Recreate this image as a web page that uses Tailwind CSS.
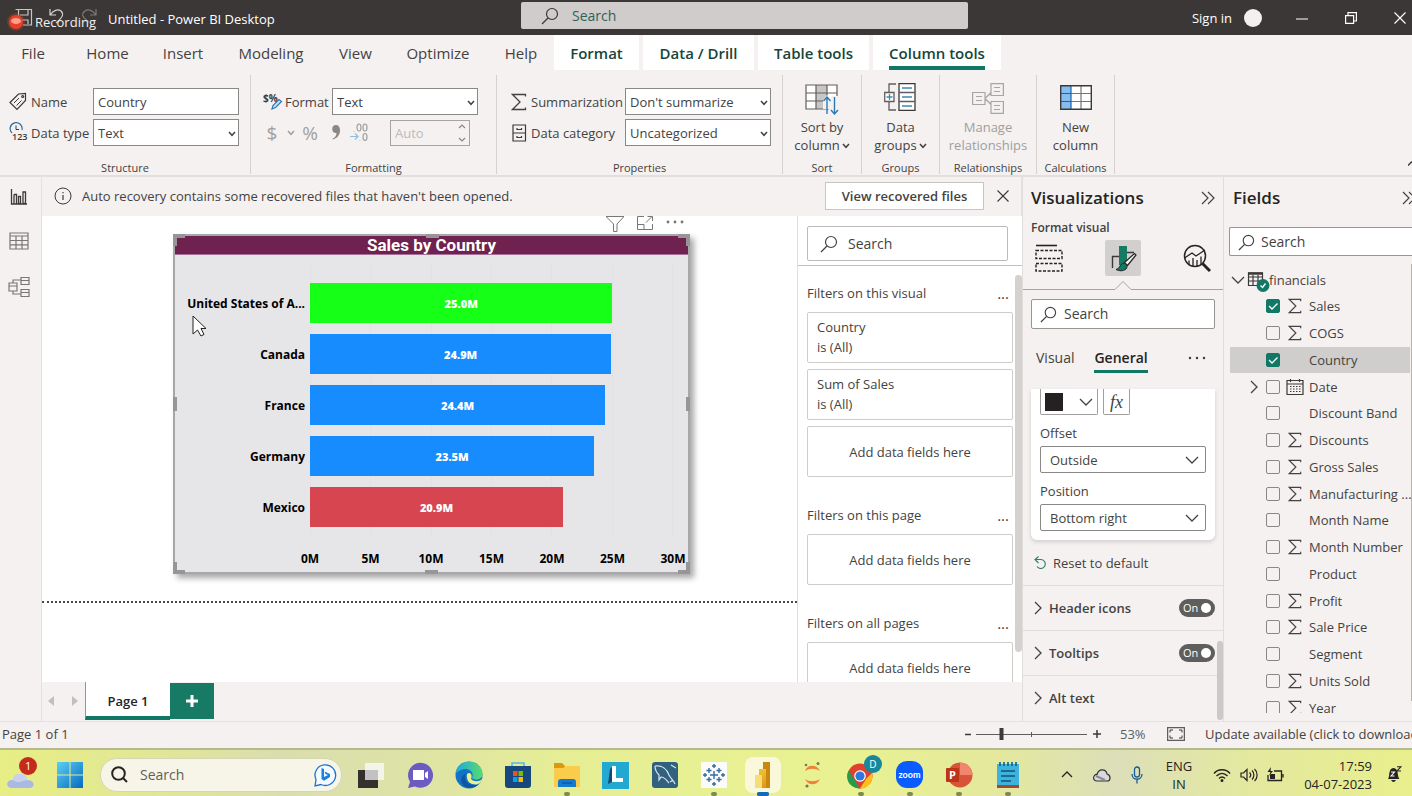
<!DOCTYPE html>
<html lang="en">
<head>
<meta charset="utf-8">
<title>Untitled - Power BI Desktop</title>
<script src="https://cdn.jsdelivr.net/npm/@tailwindcss/browser@4"></script>
</head>
<body class="flex h-screen flex-col overflow-hidden bg-[#f4f1f0] font-['Open_Sans','Noto_Sans',sans-serif] text-[13px] leading-4 text-[#444240]">

<svg class="hidden">
  <symbol id="sigma" viewBox="0 0 16 18"><path d="M14.500 3.500V1.500H1.500L9 9 1.500 16.500H14.500V14.500" fill="none" stroke="currentColor" stroke-width="1.300"/></symbol>
  <symbol id="lens" viewBox="0 0 18 18"><circle cx="11" cy="7" r="5.500" fill="none" stroke="currentColor" stroke-width="1.200"/><path d="M7 11 1 17" stroke="currentColor" stroke-width="1.300"/></symbol>
  <symbol id="down" viewBox="0 0 14 8"><path d="M1 1 7 7 13 1" fill="none" stroke="currentColor" stroke-width="1.300"/></symbol>
  <symbol id="smalldown" viewBox="0 0 8 6"><path d="M1 1 4 4.300 7 1" fill="none" stroke="currentColor" stroke-width="1.500"/></symbol>
  <symbol id="right" viewBox="0 0 8 14"><path d="M1 1 7 7 1 13" fill="none" stroke="currentColor" stroke-width="1.300"/></symbol>
  <symbol id="collapse" viewBox="0 0 14 14"><path d="M1 1 7 7 1 13M7 1 13 7 7 13" fill="none" stroke="currentColor" stroke-width="1.200"/></symbol>
  <symbol id="tick" viewBox="0 0 14 14"><path d="M3 7 6 10 11.500 4.500" fill="none" stroke="#fff" stroke-width="1.300"/></symbol>
</svg>

<!-- Title bar -->
<header class="flex h-[35px] shrink-0 items-center bg-[#3b3736] text-white">
  <div class="relative flex w-[108px] items-center self-stretch">
    <svg class="h-[35px] w-[108px]" viewBox="0 0 108 35" fill="none">
      <path d="M15.500 9.500H31.500V25H23M18.500 9.500V16M28 9.500V15H20M28 24V20H22" stroke="#c9c5c3" stroke-width="1.200"/>
      <path d="M50 9V15H56M50.500 14.500C53 10.500 58 8.500 61 11 64 14 63 17 56 23" stroke="#d6d3d1" stroke-width="1.200"/>
      <path d="M96 9V15H90M95.500 14.500C93 10.500 88 8.500 85 11 81 14 82 17 89 22" stroke="#7c7876" stroke-width="1.200"/>
      <circle cx="16" cy="22" r="9" fill="#f0462a" opacity=".25"/>
      <circle cx="16" cy="22" r="7" fill="#e8402b"/>
      <ellipse cx="16" cy="21" rx="5" ry="3" fill="#ff9f88"/>
    </svg>
    <span class="absolute top-[14px] left-[35px] text-[13px] text-[#f2f0ef]">Recording</span>
  </div>
  <h1 class="w-[413px] pt-[3px] text-[13px]">Untitled - Power BI Desktop</h1>
  <label class="-mt-1 flex h-[27px] w-[447px] items-center gap-[13px] rounded-xs bg-[#d0cccb] pt-px pl-5 text-[#3b3736]">
    <svg class="h-[18px] w-[18px]"><use href="#lens"/></svg>
    <input aria-label="Search" placeholder="Search" class="min-w-0 flex-1 bg-transparent text-[14px] outline-none placeholder:text-[#2e6354]">
  </label>
  <div class="ml-auto flex items-center">
    <button class="text-[13px]">Sign in</button>
    <span class="ml-3 size-[18px] rounded-full bg-[#f3f0ef]"></span>
    <button aria-label="Minimize" class="ml-[34px]"><svg class="h-3 w-3" viewBox="0 0 12 12"><path d="M0 7H12" stroke="#fff"/></svg></button>
    <button aria-label="Restore" class="ml-[37px]"><svg class="h-3 w-3" viewBox="0 0 12 12" fill="none" stroke="#fff" stroke-width="1.200"><path d="M.600 3.600H8.600V11.400H.600ZM3 3.600V.600H11.400V9H8.600"/></svg></button>
    <button aria-label="Close" class="mr-[6px] ml-[37px]"><svg class="h-3 w-3" viewBox="0 0 12 12"><path d="M.500.500 11.500 11.500M11.500.500.500 11.500" stroke="#fff" stroke-width="1.200"/></svg></button>
  </div>
</header>

<!-- Ribbon tabs -->
<nav class="flex h-[35px] shrink-0 text-[15px]">
  <button class="w-[66px]">File</button>
  <button class="w-[83px]">Home</button>
  <button class="w-[68px]">Insert</button>
  <button class="w-[108px]">Modeling</button>
  <button class="w-[61px]">View</button>
  <button class="w-[104px]">Optimize</button>
  <button class="w-[62px]">Help</button>
  <div class="ml-[2px] flex gap-1 font-semibold text-[#17453a] [&>button]:bg-white">
    <button class="w-[85px]">Format</button>
    <button class="w-[111px]">Data / Drill</button>
    <button class="w-[111px]">Table tools</button>
    <button class="flex w-[128px] flex-col items-center justify-end"><span class="border-b-4 border-[#117865] pb-[5px]">Column tools</span></button>
  </div>
</nav>

<!-- Ribbon -->
<section class="flex h-[107px] shrink-0 border-b-2 border-[#e3dfdd] pt-[5px] pb-px [&>div]:flex [&>div]:flex-col [&>div]:items-center [&>div]:justify-between [&>div]:border-r [&>div]:border-[#d5d1cf] [&_h2]:text-[11px] [&_h2]:leading-3">
  <div class="w-[251px]">
    <div class="mt-[13px] grid w-full grid-cols-[22px_62px_146px] gap-y-1 pl-[9px]">
      <svg class="h-[19px] w-[18px] self-center" viewBox="0 0 18 19" fill="none" stroke="#3b3a39" stroke-width="1.200"><path d="M1 10.500 9.500 2 16.500 1.500 16.500 8.500 8 17.500Z"/><path d="M5 11 10 6M7.500 13.500 12.500 8.500" stroke-width="1"/><circle cx="13.700" cy="4.500" r="1"/></svg>
      <label for="name" class="self-center">Name</label>
      <input id="name" value="Country" class="h-[27px] min-w-0 border border-[#8a8886] bg-white px-1">
      <svg class="h-[21px] w-[20px] self-center" viewBox="0 0 20 21"><path d="M3 11A6 6 0 1 1 13 8" fill="none" stroke="#2b6ea3" stroke-width="1.200"/><path d="M7 3.500V7.500H10" fill="none" stroke="#3b3a39"/><text x="3" y="17.500" font-size="9" font-weight="600" fill="#3b3a39">123</text></svg>
      <label for="dtype" class="self-center whitespace-nowrap">Data type</label>
      <div class="relative"><select id="dtype" class="h-[27px] w-full appearance-none border border-[#8a8886] bg-white px-1"><option>Text</option></select><svg class="pointer-events-none absolute top-3 right-[3px] h-[6px] w-2"><use href="#smalldown"/></svg></div>
    </div>
    <h2>Structure</h2>
  </div>
  <div class="w-[246px]">
    <div class="mt-[13px] flex w-full flex-col gap-1 pl-3">
      <div class="flex items-center">
        <svg class="h-[21px] w-[22px]" viewBox="0 0 22 21"><text x="0" y="11" font-size="10" font-weight="700" fill="#3b3a39">$%</text><path d="M9 18 10 14.500 16 8.500 18.500 10.500 12.500 16.500Z" fill="#cfe3f2" stroke="#2b7ab8" stroke-width="1.200"/></svg>
        <label for="fmt" class="w-[47px]">Format</label>
        <div class="relative"><select id="fmt" class="h-[27px] w-[146px] appearance-none border border-[#8a8886] bg-white px-1"><option>Text</option></select><svg class="pointer-events-none absolute top-3 right-[3px] h-[6px] w-2"><use href="#smalldown"/></svg></div>
      </div>
      <div class="flex h-[27px] items-center text-[#a19f9d]">
        <button disabled class="ml-[2px] w-[14px] text-[19px]">$</button>
        <svg class="ml-2 h-[6px] w-2"><use href="#smalldown"/></svg>
        <button disabled class="ml-1 w-[22px] text-[19px]">%</button>
        <svg class="ml-[10px] h-[15px] w-[10px]" viewBox="0 0 10 15"><path d="M5 0A4 4 0 1 0 5.500 8C5.500 11 4 12.500 1.500 13.500L2 14.500C6.500 13 9 10 9 5 9 2 7.500 0 5 0Z" fill="#8a8886"/></svg>
        <svg class="ml-2 h-[19px] w-[20px]" viewBox="0 0 20 19" fill="none" stroke="#a19f9d" stroke-width="1.200"><ellipse cx="10" cy="4.500" rx="2" ry="3.500"/><ellipse cx="16" cy="4.500" rx="2" ry="3.500"/><ellipse cx="16" cy="14" rx="2" ry="3.500"/><path d="M5 8V8.500M11 17V17.500"/><path d="M1 13.500H9M6 10.500 9 13.500 6 16.500" stroke="#8fbedd"/></svg>
        <div class="relative ml-[21px]"><input disabled aria-label="Decimal places" placeholder="Auto" class="h-[26px] w-[80px] border border-[#a6a3a1] bg-transparent px-1 placeholder:text-[#bdbab8]"><svg class="absolute top-1 right-1 h-[18px] w-2" viewBox="0 0 8 18" fill="none" stroke="#8a8886" stroke-width="1.200"><path d="M1 4 4 1 7 4M1 14 4 17 7 14"/></svg></div>
      </div>
    </div>
    <h2>Formatting</h2>
  </div>
  <div class="w-[286px]">
    <div class="mt-[13px] grid w-full grid-cols-[20px_94px_146px] gap-y-1 pl-[14px]">
      <svg class="h-[18px] w-4 self-center"><use href="#sigma"/></svg>
      <label for="summ" class="self-center">Summarization</label>
      <div class="relative"><select id="summ" class="h-[27px] w-full appearance-none border border-[#8a8886] bg-white px-1"><option>Don't summarize</option></select><svg class="pointer-events-none absolute top-3 right-[3px] h-[6px] w-2"><use href="#smalldown"/></svg></div>
      <svg class="h-[18px] w-4 self-center" viewBox="0 0 16 18" fill="none" stroke="#3b3a39" stroke-width="1.200"><path d="M2 1H14.500V17H2ZM2 9H14.500M6 4V5.500H10.500V4M6 12V13.500H10.500V12"/></svg>
      <label for="cat" class="self-center">Data category</label>
      <div class="relative"><select id="cat" class="h-[27px] w-full appearance-none border border-[#8a8886] bg-white px-1"><option>Uncategorized</option></select><svg class="pointer-events-none absolute top-3 right-[3px] h-[6px] w-2"><use href="#smalldown"/></svg></div>
    </div>
    <h2>Properties</h2>
  </div>
  <div class="w-[79px]">
    <button class="mt-2 flex flex-col items-center leading-[18px]">
      <svg class="mb-[3px] h-8 w-[34px]" viewBox="0 0 34 32" fill="none"><path d="M1 2H32V26H1Z" fill="#fff"/><path d="M11 2H22V26H11Z" fill="#c8c6c4"/><path d="M1 2H32V26H1ZM11 2V26M22 2V26M1 10H32M1 18H32" stroke="#605e5c" stroke-width="1.200"/><path d="M18 17 22 12 26 16 27 13H34V32H24V26H18Z" fill="#f4f1f0"/><path d="M22 31V14M18.500 18 22 14 25.500 18M29.500 14V31M26 27 29.500 31 33 27" stroke="#2b7ab8" stroke-width="1.400"/></svg>
      Sort by<span class="flex items-center gap-[2px]">column<svg class="mt-[2px] h-[6px] w-2"><use href="#smalldown"/></svg></span>
    </button>
    <h2>Sort</h2>
  </div>
  <div class="w-[78px]">
    <button class="mt-2 flex flex-col items-center leading-[18px]">
      <svg class="mb-[3px] h-8 w-8" viewBox="0 0 32 32" fill="none" stroke="#605e5c" stroke-width="1.300"><path d="M12 1H5V27H12"/><path d="M15 .700H31V27.300H15Z" fill="#fff" stroke="#3b3a39"/><path d="M15 9.500H31M15 18.500H31"/><path d="M.700 9.500H10V18.500H.700Z" fill="#fff"/><path d="M18 5H28M18 14H28M18 23H28M5.500 11V17M2.500 14H8.500" stroke="#3b8bb5"/></svg>
      Data<span class="flex items-center gap-[2px]">groups<svg class="mt-[2px] h-[6px] w-2"><use href="#smalldown"/></svg></span>
    </button>
    <h2>Groups</h2>
  </div>
  <div class="w-[97px]">
    <button disabled class="mt-2 flex flex-col items-center leading-[18px] text-[#a19f9d]">
      <svg class="mb-[3px] h-8 w-8" viewBox="0 0 32 32" fill="none" stroke="#a8a5a3" stroke-width="1.200"><path d="M.600 9.500H13V21.500H.600ZM19 .600H31.400V12.500H19ZM19 18.500H31.400V30.400H19ZM13 15.500 19 9.500M13 15.500 19 21.500M4 13.500H10M4 17.500H10M22 4.500H28M22 8.500H28M22 22.500H28M22 26.500H28"/></svg>
      Manage<span>relationships</span>
    </button>
    <h2>Relationships</h2>
  </div>
  <div class="w-[78px]">
    <button class="mt-2 flex flex-col items-center leading-[18px]">
      <svg class="mb-[3px] h-8 w-8" viewBox="0 0 32 32" fill="none"><path d="M.700 2.700H31.300V26.300H.700Z" fill="#fff"/><path d="M.700 2.700H11V26.300H.700Z" fill="#85bdf0"/><path d="M11 10.500H31M11 18.500H31M21 3V26" stroke="#797775" stroke-width="1.200"/><path d="M.700 10.500H11M.700 18.500H11M11 3V26" stroke="#1f62a5" stroke-width="1.200"/><path d="M.700 2.700H31.300V26.300H.700Z" stroke="#3b3a39" stroke-width="1.400"/></svg>
      New<span>column</span>
    </button>
    <h2>Calculations</h2>
  </div>
  <button aria-label="Collapse ribbon" class="ml-auto self-end pb-2"><svg class="h-[5px] w-1" viewBox="0 0 4 5"><path d="M0 4.500 4 .500" stroke="#3b3a39" stroke-width="1.500"/></svg></button>
</section>

<main class="flex min-h-0 flex-1">
  <!-- View switcher -->
  <aside class="flex w-[42px] shrink-0 flex-col items-center gap-[25px] border-r border-[#e5e1df] pt-[11px] pr-[3px]">
    <button aria-label="Report view"><svg class="h-[18px] w-[18px]" viewBox="0 0 18 18" fill="none" stroke="#3b3a39" stroke-width="1.300"><path d="M1.500 1V16H17M4 6.500H6.500V15.500M4 6.500V15.500M8.500 8.500H10.500V15.500H8.500ZM13 4H15.500V15.500H13Z"/></svg></button>
    <button aria-label="Data view"><svg class="h-[20px] w-[20px]" viewBox="0 0 20 20" fill="none" stroke="#797775" stroke-width="1.200"><path d="M1 2H19V18H1ZM1 5H19M1 9.500H19M1 13.800H19M7 5V18M13 5V18"/></svg></button>
    <button aria-label="Model view"><svg class="h-[22px] w-[22px]" viewBox="0 0 22 22" fill="none" stroke="#797775" stroke-width="1.200"><path d="M1 7H9V15H1ZM1 10H9M13 1.500H21V8.500H13ZM13 4.500H21M13 13.500H21V20.500H13ZM13 16.500H21M5 7V4H13M5 15V18H13"/></svg></button>
  </aside>

  <div class="flex min-w-0 flex-1 flex-col">
    <div class="flex h-[39px] shrink-0 items-center border-r border-[#e5e1df] pb-[2px] pl-3">
      <svg class="size-[18px]" viewBox="0 0 18 18" fill="none" stroke="#3b3a39"><circle cx="9" cy="9" r="8"/><path d="M9 8V13M9 5V6.300" stroke-width="1.200"/></svg>
      <p class="ml-[10px]">Auto recovery contains some recovered files that haven't been opened.</p>
      <button class="ml-auto h-7 w-[159px] border border-[#c8c6c4] bg-white font-semibold">View recovered files</button>
      <button aria-label="Dismiss" class="mr-3 ml-[13px]"><svg class="size-[12px]" viewBox="0 0 12 12"><path d="M.500.500 11.500 11.500M11.500.500.500 11.500" stroke="#3b3a39" stroke-width="1.100"/></svg></button>
    </div>

    <div class="flex min-h-0 flex-1 bg-white">
      <!-- Report canvas -->
      <div class="min-w-0 flex-1">
        <div class="ml-[131px] w-[517px]">
          <div class="flex h-[18px] justify-end gap-[13px] pr-[6px]">
            <svg class="h-[16px] w-[18px]" viewBox="0 0 18 16" fill="none" stroke="#797775"><path d="M0 .500H18L11 8V15.500H7.500V8Z"/></svg>
            <svg class="h-[14px] w-[16px]" viewBox="0 0 16 14" fill="none" stroke="#797775"><path d="M7 .500H.500V13.500H15.500V8M.500 8.500H7V13.500M9 6.500 15 .500M10.500.500H15.500V5"/></svg>
            <svg class="h-[14px] w-[18px]" viewBox="0 0 18 14" fill="#797775"><circle cx="2" cy="6" r="1.400"/><circle cx="9" cy="6" r="1.400"/><circle cx="16" cy="6" r="1.400"/></svg>
          </div>
          <figure class="relative flex h-[340px] flex-col border-2 border-[#a8a6a8] bg-[#e6e5e8] text-[12px] font-bold text-black shadow-[4px_4px_6px_rgba(0,0,0,0.35)]">
            <figcaption class="h-[19px] border-b border-[#a5719a] bg-[#6f2150] text-center font-['Roboto',sans-serif] text-[17px] leading-[19px] font-bold text-white">Sales by Country</figcaption>
            <div class="relative flex flex-1 flex-col pt-7 pl-[135px]">
              <div class="pointer-events-none absolute top-[10px] bottom-[34px] left-[135px] flex w-[363px] justify-between [&>i]:border-l [&>i]:border-dotted [&>i]:border-[#dedcdf]"><i></i><i></i><i></i><i></i><i></i><i></i><i></i></div>
              <div class="relative flex w-[363px] flex-col gap-[11px] [&>div]:flex [&>div]:h-10 [&>div]:items-center [&_b]:flex [&_b]:h-10 [&_b]:items-center [&_b]:justify-center [&_b]:pt-px [&_b]:text-[11px] [&_b]:text-white [&_span]:-ml-[135px] [&_span]:w-[135px] [&_span]:shrink-0 [&_span]:pt-px [&_span]:pr-[5px] [&_span]:text-right [&_span]:whitespace-nowrap">
                <div><span>United States of A...</span><b class="bg-[#16ff16]" style="width:83.3%">25.0M</b></div>
                <div><span>Canada</span><b class="bg-[#168cff]" style="width:83%">24.9M</b></div>
                <div><span>France</span><b class="bg-[#168cff]" style="width:81.3%">24.4M</b></div>
                <div><span>Germany</span><b class="bg-[#168cff]" style="width:78.3%">23.5M</b></div>
                <div><span>Mexico</span><b class="bg-[#d64550]" style="width:69.7%">20.9M</b></div>
              </div>
              <div class="mt-6 flex w-[363px] justify-between [&>span]:flex [&>span]:w-0 [&>span]:justify-center"><span>0M</span><span>5M</span><span>10M</span><span>15M</span><span>20M</span><span>25M</span><span>30M</span></div>
            </div>
            <!-- Resize handles and pointer -->
            <svg class="pointer-events-none absolute -top-[2px] -left-[2px] h-[340px] w-[517px]" viewBox="0 0 517 340" fill="none" stroke="#979597" stroke-width="4">
              <path d="M2 12V2H12M253 2H266M505 2H515V12M2 328V338H12M252 338H265M505 338H515V328M2 163V177M515 163V177"/>
              <path d="M20 82V100L24.500 96 28 102 31 100.500 28 94.500H33Z" fill="#fff" stroke="#222" stroke-width="1"/>
            </svg>
          </figure>
        </div>
        <div class="mt-[27px] border-t-2 border-dotted border-[#4a4848]"></div>
      </div>

      <!-- Filters -->
      <aside class="flex w-[225px] shrink-0 flex-col border-l border-[#e0dddb]">
        <div class="border-b border-[#c0bdbb] px-[9px] pt-[10px] pb-1 pr-[14px]">
          <label class="flex h-[35px] items-center gap-[10px] rounded-xs border border-[#bdbab8] px-3"><svg class="size-[18px]"><use href="#lens"/></svg><input aria-label="Search filters" placeholder="Search" class="min-w-0 flex-1 text-[14px] outline-none placeholder:text-[#444240]"></label>
        </div>
        <div class="relative min-h-0 flex-1 overflow-hidden pt-[18px] pr-[9px] pl-[9px] [&>section>h3]:flex [&>section>h3]:h-[18px] [&>section>h3]:items-center [&>section>h3]:justify-between [&>section>h3]:pr-1 [&>section>ul]:mt-[10px] [&>section>ul]:flex [&>section>ul]:flex-col [&>section>ul]:gap-[6px] [&_li]:h-[51px] [&_li]:rounded-xs [&_li]:border [&_li]:border-[#cfccca] [&_li]:leading-5">
          <section>
            <h3>Filters on this visual <button aria-label="More" class="text-[15px]">...</button></h3>
            <ul>
              <li class="px-[9px] pt-1">Country<br>is (All)</li>
              <li class="px-[9px] pt-1">Sum of Sales<br>is (All)</li>
              <li class="flex items-center justify-center">Add data fields here</li>
            </ul>
          </section>
          <section class="mt-[29px]">
            <h3>Filters on this page <button aria-label="More" class="text-[15px]">...</button></h3>
            <ul><li class="flex items-center justify-center">Add data fields here</li></ul>
          </section>
          <section class="mt-[29px]">
            <h3>Filters on all pages <button aria-label="More" class="text-[15px]">...</button></h3>
            <ul><li class="flex items-center justify-center">Add data fields here</li></ul>
          </section>
          <div class="absolute top-[9px] right-0 bottom-[30px] w-[7px] rounded-full bg-[#d4d1d0]"></div>
        </div>
      </aside>
    </div>

    <!-- Page tabs -->
    <div class="flex h-[39px] shrink-0 items-start">
      <button aria-label="Previous page" class="mt-[14px] ml-[6px]"><svg class="h-[10px] w-[6px]" viewBox="0 0 6 10"><path d="M6 0V10L0 5Z" fill="#c2bfbd"/></svg></button>
      <button aria-label="Next page" class="mt-[14px] ml-[18px]"><svg class="h-[10px] w-[6px]" viewBox="0 0 6 10"><path d="M0 0V10L6 5Z" fill="#c2bfbd"/></svg></button>
      <button class="ml-[7px] h-[38px] w-[85px] border-b-4 border-l border-b-[#117865] border-l-[#979593] bg-white pt-1 font-semibold text-[#252423]">Page 1</button>
      <button aria-label="New page" class="mt-px flex h-9 w-11 items-center justify-center bg-[#177a64]"><svg class="size-3" viewBox="0 0 12 12"><path d="M6 0V12M0 6H12" stroke="#fff" stroke-width="3"/></svg></button>
    </div>
  </div>

  <!-- Visualizations -->
  <aside class="relative flex w-[202px] shrink-0 flex-col overflow-hidden border-x border-[#e0dddb]">
    <div class="flex items-center justify-between px-[8px] pt-[11px]"><h2 class="text-[17px] leading-5 font-semibold text-[#252423]">Visualizations</h2><button aria-label="Collapse"><svg class="size-[14px]"><use href="#collapse"/></svg></button></div>
    <h3 class="mt-3 px-[8px] text-[12px] leading-4 font-semibold">Format visual</h3>
    <div class="mt-1 flex h-9 items-center pl-[12px]">
      <button aria-label="Build visual"><svg class="size-7" viewBox="0 0 28 28" fill="none" stroke="#252423"><path d="M1 1.500H22" stroke-width="1.600"/><path d="M1 6.500H27V14.500H1ZM1 19.500H27V27H1Z" stroke-width="1.400" stroke-dasharray="3 1.500"/></svg></button>
      <button aria-label="Format visual" class="ml-[42px] flex size-9 items-center justify-center rounded-xs bg-[#d2d0ce]"><svg class="size-7" viewBox="0 0 28 28" fill="none"><path d="M3.500 24V12.500H10M18 8.500H25" stroke="#3b3a39" stroke-width="1.400"/><path d="M10 2H18V16L13 21H10Z" fill="#177a64"/><path d="M15.500 18.500 25.500 9.500 27 11 18.500 21.500Z" fill="#f4f1f0" stroke="#252423" stroke-width="1.200"/><path d="M7 25.500C11 25 10 21 13.500 19.500 17 18.500 19.500 22 17 25 14 27.500 10 27 7 25.500Z" fill="#117865" stroke="#252423"/></svg></button>
      <button aria-label="Analytics" class="ml-[42px]"><svg class="size-7" viewBox="0 0 28 28" fill="none" stroke="#252423" stroke-width="1.500"><circle cx="12" cy="12" r="10.500"/><path d="M19.500 19.500 27 27" stroke-width="3"/><path d="M1.500 14 9 9 13 12 22 6M6 21V16.500M10 22.500V14M14 22.500V16M18 20V12.500" stroke-width="1.300"/></svg></button>
    </div>
    <svg class="mt-1 h-[10px] w-[201px] shrink-0" viewBox="0 0 201 10" fill="none"><path d="M0 9.500H92L100 1.500 108 9.500H201" stroke="#a6a3a1"/></svg>
    <label class="mt-[9px] mr-[8px] ml-[8px] flex h-[30px] items-center gap-[7px] rounded-xs border border-[#979593] bg-white px-2"><svg class="size-[17px]"><use href="#lens"/></svg><input aria-label="Search settings" placeholder="Search" class="min-w-0 flex-1 text-[14px] outline-none placeholder:text-[#444240]"></label>
    <div class="mt-[17px] flex h-[27px] items-start pl-[13px] text-[14px] leading-6">
      <button class="h-6">Visual</button>
      <button class="ml-5 h-[27px] border-b-[3px] border-[#117865] font-semibold text-[#252423]">General</button>
      <button aria-label="More options" class="mt-[10px] ml-auto mr-[17px]"><svg class="h-1 w-[18px]" viewBox="0 0 18 4" fill="#3b3a39"><circle cx="2" cy="2" r="1.200"/><circle cx="9" cy="2" r="1.200"/><circle cx="16" cy="2" r="1.200"/></svg></button>
    </div>
    <div class="mx-[8px] mt-[16px] flex flex-col rounded-b-md bg-white px-[9px] pb-[9px] shadow-[0_2px_4px_rgba(0,0,0,0.15)]">
      <div class="flex gap-[5px]">
        <button aria-label="Shadow color" class="flex h-[26px] w-[58px] items-center justify-between rounded-b-xs border border-t-0 border-[#a19f9d] pr-1 pl-1"><span class="size-[18px] bg-[#252021]"></span><svg class="h-2 w-[14px]"><use href="#down"/></svg></button>
        <button aria-label="Conditional formatting" class="h-[26px] w-[27px] rounded-b-xs border border-t-0 border-[#a19f9d] font-['Liberation_Serif',serif] text-[18px] leading-5 italic">fx</button>
      </div>
      <label for="offset" class="mt-[10px]">Offset</label>
      <div class="relative mt-[5px]"><select id="offset" class="h-[27px] w-full appearance-none rounded-xs border border-[#8a8886] bg-white px-[9px]"><option>Outside</option></select><svg class="pointer-events-none absolute top-[10px] right-[7px] h-2 w-[14px]"><use href="#down"/></svg></div>
      <label for="position" class="mt-[10px]">Position</label>
      <div class="relative mt-[5px]"><select id="position" class="h-[27px] w-full appearance-none rounded-xs border border-[#8a8886] bg-white px-[9px]"><option>Bottom right</option></select><svg class="pointer-events-none absolute top-[10px] right-[7px] h-2 w-[14px]"><use href="#down"/></svg></div>
    </div>
    <button class="flex h-[45px] shrink-0 items-center gap-[6px] pl-[11px]"><svg class="size-[13px]" viewBox="0 0 13 13" fill="none" stroke="#2c7f6a" stroke-width="1.100"><path d="M4.500.500 1 3.500 4.500 7M1 3.500H7A4.500 4.500 0 1 1 3 10.500"/></svg>Reset to default</button>
    <div class="[&>div]:flex [&>div]:h-[45px] [&>div]:items-center [&>div]:border-t [&>div]:border-[#e0dddb] [&>div]:pr-[8px] [&>div]:pl-[11px] [&>div]:font-semibold">
      <div><svg class="mr-[7px] h-[14px] w-2"><use href="#right"/></svg>Header icons<label class="ml-auto flex h-[18px] w-9 items-center justify-between rounded-full bg-[#605e5c] px-1 text-[11px] font-normal text-white"><input type="checkbox" checked aria-label="Header icons" class="sr-only">On<span class="size-[10px] rounded-full bg-white"></span></label></div>
      <div><svg class="mr-[7px] h-[14px] w-2"><use href="#right"/></svg>Tooltips<label class="ml-auto flex h-[18px] w-9 items-center justify-between rounded-full bg-[#605e5c] px-1 text-[11px] font-normal text-white"><input type="checkbox" checked aria-label="Tooltips" class="sr-only">On<span class="size-[10px] rounded-full bg-white"></span></label></div>
      <div><svg class="mr-[7px] h-[14px] w-2"><use href="#right"/></svg>Alt text</div>
    </div>
    <div class="absolute right-0 bottom-px h-[79px] w-[6px] rounded-full bg-[#cbc8c7]"></div>
  </aside>

  <!-- Fields -->
  <aside class="relative flex w-[188px] shrink-0 flex-col overflow-hidden">
    <div class="flex items-center justify-between pt-[11px] pl-[9px]"><h2 class="text-[17px] leading-5 font-semibold text-[#252423]">Fields</h2><button aria-label="Collapse" class="w-[10px] overflow-hidden"><svg class="size-[14px]"><use href="#collapse"/></svg></button></div>
    <label class="mt-[19px] ml-[5px] flex h-[29px] shrink-0 items-center gap-[6px] rounded-l-xs border border-r-0 border-[#979593] bg-white px-2 pt-px"><svg class="size-[17px]"><use href="#lens"/></svg><input aria-label="Search fields" placeholder="Search" class="min-w-0 flex-1 text-[14px] outline-none placeholder:text-[#444240]"></label>
    <div class="mb-[8px] min-h-0 flex-1 overflow-hidden pt-[10px] pr-[2px] pl-[6px]">
      <div class="flex h-[27px] items-center pl-[1px]"><svg class="h-2 w-[14px]"><use href="#down"/></svg>
        <svg class="ml-[2px] h-[24px] w-[24px]" viewBox="0 0 24 24" fill="none"><path d="M1.500 5H15.500V17.500H1.500ZM1.500 9H15.500M1.500 13H15.500M6 7V17M11 7V17" stroke="#3b3a39" stroke-width="1.200"/><path d="M1 5.500H16" stroke="#3b3a39" stroke-width="2.500"/><circle cx="16" cy="17.500" r="6.500" fill="#117865"/><path d="M13.500 17.500 15.500 19.500 18.500 15.500" stroke="#fff" stroke-width="1.300"/></svg>
        <span class="-ml-[2px]">financials</span></div>
      <ul class="flex h-[428px] flex-col [&>li]:flex [&>li]:flex-1 [&>li]:items-center [&>li]:pl-[20px] [&>li]:whitespace-nowrap [&_input]:col-start-1 [&_input]:row-start-1 [&_input]:size-[14px] [&_input]:appearance-none [&_input]:rounded-xs [&_input]:border [&_input]:border-[#8a8886] [&_input]:checked:border-[#117865] [&_input]:checked:bg-[#117865] [&_label]:flex [&_label]:shrink-0 [&_label]:items-center [&_label>span]:ml-2 [&_label>span]:flex [&_label>span]:w-[21px] [&_label>i]:grid [&_label>i]:size-[14px] [&_i>svg]:z-1 [&_i>svg]:col-start-1 [&_i>svg]:row-start-1 [&_i>svg]:size-[14px] [&_span>svg]:h-[18px] [&_span>svg]:w-[14px] [&_em]:w-4 [&_em]:shrink-0">
        <li><em></em><label><i><input type="checkbox" checked><svg><use href="#tick"/></svg></i><span><svg><use href="#sigma"/></svg></span>Sales</label></li>
        <li><em></em><label><i><input type="checkbox"></i><span><svg><use href="#sigma"/></svg></span>COGS</label></li>
        <li class="bg-[#d0cecd]"><em></em><label><i><input type="checkbox" checked><svg><use href="#tick"/></svg></i><span></span>Country</label></li>
        <li><em><svg class="h-[14px] w-2"><use href="#right"/></svg></em><label><i><input type="checkbox"></i><span><svg class="-ml-[2px] min-w-[18px]" viewBox="0 0 18 18" fill="none" stroke="#3b3a39" stroke-width="1.200"><path d="M1 2.500H17V16.500H1ZM1 6H17M4.500 1V4M13.500 1V4"/><path d="M4 8.500H14.500M4 11H14.500M4 13.500H14.500" stroke-dasharray="1.500 1.500"/></svg></span>Date</label></li>
        <li><em></em><label><i><input type="checkbox"></i><span></span>Discount Band</label></li>
        <li><em></em><label><i><input type="checkbox"></i><span><svg><use href="#sigma"/></svg></span>Discounts</label></li>
        <li><em></em><label><i><input type="checkbox"></i><span><svg><use href="#sigma"/></svg></span>Gross Sales</label></li>
        <li><em></em><label><i><input type="checkbox"></i><span><svg><use href="#sigma"/></svg></span>Manufacturing ...</label></li>
        <li><em></em><label><i><input type="checkbox"></i><span></span>Month Name</label></li>
        <li><em></em><label><i><input type="checkbox"></i><span><svg><use href="#sigma"/></svg></span>Month Number</label></li>
        <li><em></em><label><i><input type="checkbox"></i><span></span>Product</label></li>
        <li><em></em><label><i><input type="checkbox"></i><span><svg><use href="#sigma"/></svg></span>Profit</label></li>
        <li><em></em><label><i><input type="checkbox"></i><span><svg><use href="#sigma"/></svg></span>Sale Price</label></li>
        <li><em></em><label><i><input type="checkbox"></i><span></span>Segment</label></li>
        <li><em></em><label><i><input type="checkbox"></i><span><svg><use href="#sigma"/></svg></span>Units Sold</label></li>
        <li><em></em><label><i><input type="checkbox"></i><span><svg><use href="#sigma"/></svg></span>Year</label></li>
      </ul>
    </div>
    <div class="absolute top-[87px] right-0 bottom-5 w-px bg-[#b5b2b0]"></div>
  </aside>
</main>

<!-- Status bar -->
<footer class="flex h-[27px] shrink-0 items-center overflow-hidden border-t border-[#e5e1df] pb-[2px] pl-[2px] whitespace-nowrap">
  <span>Page 1 of 1</span>
  <button aria-label="Zoom out" class="ml-auto"><svg class="h-3 w-[6px]" viewBox="0 0 6 12"><path d="M0 6.500H6" stroke="#3b3a39" stroke-width="1.500"/></svg></button>
  <svg class="ml-[5px] h-3 w-[111px]" viewBox="0 0 111 12"><path d="M0 6.500H111M55.500 4V9" stroke="#605e5c"/><path d="M25.500 0V12" stroke="#3b3a39" stroke-width="4"/></svg>
  <button aria-label="Zoom in" class="ml-[6px]"><svg class="size-2" viewBox="0 0 8 8"><path d="M4 0V8M0 4H8" stroke="#3b3a39" stroke-width="1.500"/></svg></button>
  <span class="ml-[19px] w-[47px] text-[13px] text-[#605e5c]">53%</span>
  <button aria-label="Fit to page"><svg class="h-[14px] w-[18px]" viewBox="0 0 18 14" fill="none" stroke="#605e5c"><path d="M.600.600H17.400V13.400H.600Z" stroke-width="1.300"/><path d="M3 5.500V3H6M12 3H15V5.500M15 8.500V11H12M6 11H3V8.500" stroke="#3b3a39"/></svg></button>
  <button class="ml-5 w-[207px] overflow-hidden text-left">Update available (click to download)</button>
</footer>

<!-- Windows taskbar -->
<footer class="flex h-[48px] shrink-0 items-center border-t-2 border-[#b4ba8a] bg-[linear-gradient(90deg,#e7ee84_0%,#e2e795_10%,#dadeae_20%,#dde2a8_28%,#e6ee95_40%,#e9f291_60%,#e4e99c_70%,#dcdfb8_79%,#e3e8a0_88%,#e9ef8c_100%)] pt-[3px] text-[#252423]">
  <button aria-label="Weather" class="w-[46px]"><svg class="-mt-1 h-9 w-10" viewBox="0 0 40 36"><path d="M12 33C5 33 6 24 13 25 14 17 26 17 27 25 35 25 36 33 29 33Z" fill="#a9b9e2"/><path d="M13 25C14 17 26 17 27 25 22 26 18 29 13 25Z" fill="#c7d2f0"/><circle cx="28" cy="11" r="9" fill="#c42b1c"/><text x="25" y="15" font-size="11" fill="#fff">1</text></svg></button>
  <button aria-label="Start" class="flex w-[54px] items-center justify-start pl-[11px]"><svg class="size-[26px]" viewBox="0 0 26 26"><defs><linearGradient id="win" x2="1" y2="1"><stop stop-color="#5cd0f5"/><stop offset="1" stop-color="#0669bf"/></linearGradient></defs><path d="M0 0H12.500V12.500H0ZM13.500 0H26V12.500H13.500ZM0 13.500H12.500V26H0ZM13.500 13.500H26V26H13.500Z" fill="url(#win)"/></svg></button>
  <label class="flex h-[34px] w-[242px] items-center gap-3 rounded-full border border-[#d5d7b4] bg-[#f7f5e8] pr-1 pl-[10px]">
    <svg class="size-[17px]" viewBox="0 0 17 17" fill="none" stroke="#252423" stroke-width="2"><circle cx="7.500" cy="7.500" r="6.300"/><path d="M12 12 16 16"/></svg>
    <input aria-label="Taskbar search" placeholder="Search" class="min-w-0 flex-1 bg-transparent text-[14px] outline-none placeholder:text-[#605e5c]">
    <svg class="size-6" viewBox="0 0 24 24"><path d="M2 23 3 16.500A10.300 10.300 0 1 1 8 21.500Z" fill="#f4fbff" stroke="#1f72d0" stroke-width="1.300"/><path d="M8.500 5 11 6V14L15 12 12.500 11 11.500 8.500 17 11V14L11 17.800 8.500 16Z" fill="#1b7fe0"/></svg>
  </label>
  <div class="ml-1 flex self-stretch [&>button]:relative [&>button]:flex [&>button]:w-[49px] [&>button]:items-center [&>button]:justify-center [&>button>svg]:size-[28px] [&_i]:absolute [&_i]:bottom-0 [&_i]:h-1 [&_i]:w-[6px] [&_i]:rounded-full [&_i]:bg-[#80894f]">
    <button aria-label="Task view"><svg viewBox="0 0 28 28"><path d="M1 9H21V27H1Z" fill="#33302e"/><path d="M8 2H27V19H8Z" fill="#fafafa" opacity=".8"/><path d="M8 9H21V19H8Z" fill="#c3c1c1"/></svg></button>
    <button aria-label="Chat"><svg viewBox="0 0 28 28"><path d="M2 27 4 21A12.500 12.500 0 1 1 9 25.500Z" fill="#6c5bc0"/><path d="M7 9H18V19H7ZM19 12 22 10V18L19 16Z" fill="#fff"/></svg></button>
    <button aria-label="Edge"><svg viewBox="0 0 28 28"><defs><linearGradient id="edge"><stop stop-color="#1fa7e0"/><stop offset="1" stop-color="#57dc6d"/></linearGradient></defs><circle cx="14" cy="14" r="13.500" fill="#1372c4"/><path d="M.500 13C2-4 27-3 27.500 13 27.500 19 20 20 17 17 20 10 12 6 6 9 3 10 1 12 .500 13Z" fill="url(#edge)"/><path d="M10 14C9 21 15 26 24 23 21 26 15 28 11 26 3 22 6 13 13 12 11 13 10 13 10 14Z" fill="#0f55a3"/><path d="M12 13C15 10 18 14 16 18 19 21 24 21 27 18 26 21 24 23 22 23.500 14 24 11 19 12 13Z" fill="#e9f291"/></svg></button>
    <button aria-label="Microsoft Store"><svg viewBox="0 0 28 28"><path d="M8 6V2H20V6" fill="none" stroke="#57b7e5" stroke-width="1.600"/><path d="M1 5H27V24Q27 27 24 27H4Q1 27 1 24Z" fill="#17477f"/><path d="M9 10H13.500V15H9Z" fill="#f25022"/><path d="M14.500 10H19V15H14.500Z" fill="#7fba00"/><path d="M9 16H13.500V21H9Z" fill="#00a4ef"/><path d="M14.500 16H19V21H14.500Z" fill="#ffb900"/></svg></button>
    <button aria-label="File Explorer"><svg viewBox="0 0 28 28"><path d="M1 2H9L12 5V12H1Z" fill="#d99a12"/><path d="M1 7H10L13 5H27V26H1Z" fill="#fbcb4b"/><path d="M5 26V21Q5 18 8 18H20Q23 18 23 21V26Z" fill="#1479d1"/><path d="M9 22H19" stroke="#0c5ba4" stroke-width="1.500"/></svg><i></i></button>
    <button aria-label="L app"><svg viewBox="0 0 28 28"><path d="M0 1H27V28H0Z" fill="#22a9d2"/><path d="M10 6V21L6 23 8 8Z" fill="#164a6d"/><path d="M10 5H14V17H21V21H10Z" fill="#fff"/></svg></button>
    <button aria-label="MySQL Workbench"><svg viewBox="0 0 28 28"><rect x="1" y="1" width="26" height="26" rx="3" fill="#32617f"/><path d="M4 5C11 4 16 8 18 14 20 18 23 20 24 23M4 5C4 10 6 12 8 14V19L10 16C14 16 16 20 18 22M20 4 25 7M22 19 19 21" fill="none" stroke="#d6e4ec" stroke-width="1.200"/></svg></button>
    <button aria-label="Tableau"><svg viewBox="0 0 28 28" fill="none"><path d="M1 1H27V27H1Z" fill="#fbfbfa"/><path d="M14 10V18M10 14H18M9 7V12M6.500 9.500H11.500M19 7V12M16.500 9.500H21.500M9 16V21M6.500 18.500H11.500M19 16V21M16.500 18.500H21.500M14 3V7M12 5H16M14 21V25M12 23H16M5 12V16M3 14H7M23 12V16M21 14H25" stroke="#376ca0" stroke-width="1.400"/></svg><i></i></button>
    <button aria-label="Power BI"><svg class="rounded-sm bg-[#f9f8db] outline-4 outline-[#f9f8db]" viewBox="0 0 28 28"><defs><linearGradient id="pbi" x2="0" y2="1"><stop stop-color="#f2c033"/><stop offset="1" stop-color="#e0951a"/></linearGradient></defs><path d="M14 1H21V27H14Z" fill="#c8870e"/><path d="M10 8H17V27H10Z" fill="url(#pbi)"/><path d="M6 14H13V27H6Z" fill="#f8dc78"/></svg><i class="min-w-3 text-[#0f6cbd]"><svg class="h-1 w-3" viewBox="0 0 12 4"><rect width="12" height="4" rx="2" fill="currentColor"/></svg></i></button>
    <button aria-label="Jupyter"><svg viewBox="0 0 28 28"><path d="M7 10C9 3 19 3 22 10 17 7 12 7 7 10ZM7 18C11 21 17 21 22 18 19 25 10 25 7 18Z" fill="#f0803a"/><circle cx="8" cy="4" r="1.300" fill="#80764d"/><circle cx="20" cy="2.500" r="1.500" fill="#80764d"/><circle cx="9" cy="25" r="1.600" fill="#80764d"/></svg></button>
    <button aria-label="Chrome"><svg viewBox="0 0 28 28"><circle cx="13" cy="15" r="12.500" fill="#e0402e"/><path d="M1.500 9.500 9 21 13 27.500C1 27 -2 17 1.500 9.500Z" fill="#279b4a"/><path d="M13 27.500 19 18 25 12C27 22 20 27.500 13 27.500Z" fill="#fbc116"/><circle cx="13" cy="15" r="5.800" fill="#fff"/><circle cx="13" cy="15" r="4.600" fill="#2f77dd"/></svg><b class="absolute top-[2px] right-[3px] flex size-[18px] items-center justify-center rounded-full bg-[#17879c] text-[10px] font-normal text-white">D</b><i></i></button>
    <button aria-label="Zoom"><span class="flex h-[27px] w-[27px] items-center justify-center rounded-[11px] bg-[#0b5cff] font-['Lato',sans-serif] text-[9px] font-bold text-white">zoom</span><i></i></button>
    <button aria-label="PowerPoint"><svg viewBox="0 0 28 28"><circle cx="15" cy="14" r="12.500" fill="#d9533a"/><path d="M15 1.500A12.500 12.500 0 0 1 27.500 14H15Z" fill="#f0866b"/><rect x="1" y="7" width="13" height="14" rx="1" fill="#bd3418"/><text x="4" y="18" font-size="11" font-weight="700" fill="#fff">P</text></svg><i></i></button>
    <button aria-label="Notepad"><svg viewBox="0 0 28 28"><path d="M3 3H25V25H3Z" fill="#3cb2dc"/><path d="M3 24H25V27H3Z" fill="#a5472c"/><path d="M7 10H21M7 15H21M7 20H17" stroke="#0f5474" stroke-width="1.600"/><path d="M6 1V5M10 1V5M14 1V5M18 1V5M22 1V5" stroke="#0e6085" stroke-width="1.600"/></svg><i></i></button>
  </div>
  <div class="ml-auto flex items-center pr-[10px]">
    <button aria-label="Hidden icons"><svg class="h-[7px] w-3" viewBox="0 0 12 7"><path d="M1 6 6 1 11 6" fill="none" stroke="#252423" stroke-width="1.300"/></svg></button>
    <svg class="ml-[20px] h-[14px] w-[18px]" viewBox="0 0 18 14"><path d="M4 13C-1 13 0 6 4 6.500 6 0 13 1 14 6 18 7 18 13 14 13Z" fill="#d9d9dd" stroke="#333" stroke-width="1.200"/><path d="M3 8 12 12" stroke="#8a8a90" stroke-width="2"/></svg>
    <svg class="ml-[20px] h-[18px] w-3" viewBox="0 0 12 18" fill="none" stroke="#1b5a96" stroke-width="1.300"><rect x="3.500" y="1" width="5" height="10" rx="2.500"/><path d="M1 8C1 15 11 15 11 8M6 13.500V17.500"/></svg>
    <button class="ml-[19px] w-[34px] text-center text-[13px] leading-[18px]">ENG<br>IN</button>
    <svg class="ml-[17px] h-[14px] w-[18px]" viewBox="0 0 18 14" fill="none" stroke="#252423" stroke-width="1.400"><path d="M1 5.500C5 .500 13 .500 17 5.500M3.500 8C7 4.500 11 4.500 14.500 8M6 10.500C8 8.500 10 8.500 12 10.500"/><circle cx="9" cy="12.500" r=".8"/></svg>
    <svg class="ml-[9px] h-[14px] w-[18px]" viewBox="0 0 18 14" fill="none" stroke="#252423" stroke-width="1.200"><path d="M1 5H3.500L7 1.500V12.500L3.500 9H1ZM9.500 4.500C11 6 11 8 9.500 9.500M12 2.500C14.500 5 14.500 9 12 11.500M14.500 1C18 4 18 10 14.500 13"/></svg>
    <svg class="ml-[8px] h-[16px] w-[18px]" viewBox="0 0 18 16" fill="none" stroke="#252423" stroke-width="1.300"><path d="M8 4H15.500V13.500H2V8M17 7V10.500"/><path d="M4 7H9V12H4ZM5 0 1.500 5H4.500L3 9 7 4H4.500Z" fill="#252423" stroke="none"/></svg>
    <button class="ml-[14px] w-[74px] text-right text-[13px] leading-[18px] whitespace-nowrap">17:59<br>04-07-2023</button>
    <svg class="ml-[14px] h-[17px] w-[16px]" viewBox="0 0 16 17"><path d="M2 13C4 11 2 2 7.500 2 13 2 11 11 13.500 13ZM5 14H10Q7.500 18 5 14Z" fill="#252423"/><path d="M5 6H8.500L5 10H8.500" fill="none" stroke="#fff" stroke-width="1.100"/><path d="M11 .700H15L11 5H15" fill="none" stroke="#252423" stroke-width="1.100"/></svg>
  </div>
</footer>
</body>
</html>
